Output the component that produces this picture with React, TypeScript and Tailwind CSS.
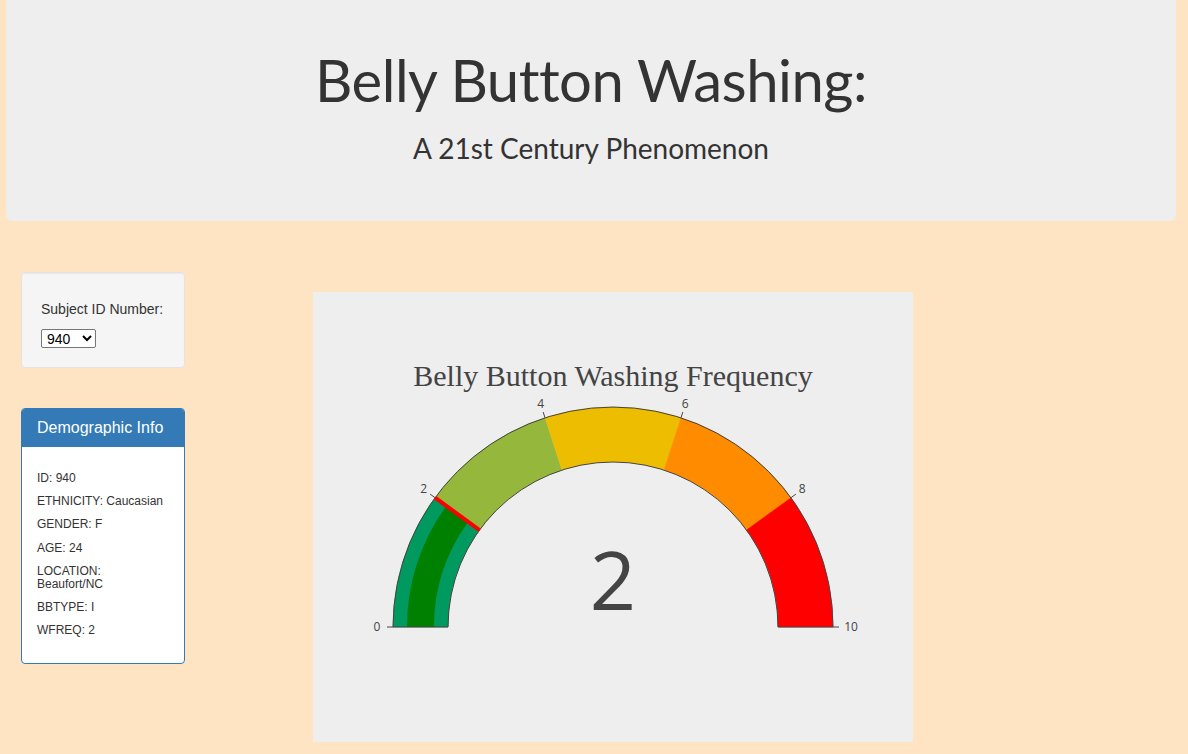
import React from "react";

const CX = 300;
const CY = 335;
const R_OUT = 220;
const R_IN = 165;

const angle = (v: number) => Math.PI * (1 - v / 10);
const pt = (v: number, r: number) => {
  const a = angle(v);
  return [CX + r * Math.cos(a), CY - r * Math.sin(a)];
};

// annular sector between two values, drawn from r0 to r1
function band(a: number, b: number, r0: number, r1: number) {
  const [x1, y1] = pt(a, r1);
  const [x2, y2] = pt(b, r1);
  const [x3, y3] = pt(b, r0);
  const [x4, y4] = pt(a, r0);
  return `M${x1},${y1} A${r1},${r1} 0 0 1 ${x2},${y2} L${x3},${y3} A${r0},${r0} 0 0 0 ${x4},${y4} Z`;
}

const steps = [
  { from: 0, to: 2, color: "#00995f" },
  { from: 2, to: 4, color: "#94b73c" },
  { from: 4, to: 6, color: "#edbd02" },
  { from: 6, to: 8, color: "#ff8c00" },
  { from: 8, to: 10, color: "#ff0000" },
];

const ticks = [0, 2, 4, 6, 8, 10];

const demographics = [
  ["ID", "940"],
  ["ETHNICITY", "Caucasian"],
  ["GENDER", "F"],
  ["AGE", "24"],
  ["LOCATION", "Beaufort/NC"],
  ["BBTYPE", "I"],
  ["WFREQ", "2"],
];

function Gauge() {
  const value = 2;
  return (
    <svg width={600} height={450} className="block">
      <text
        x={300}
        y={94}
        textAnchor="middle"
        fontSize={30}
        fill="#444"
        style={{ fontFamily: '"Liberation Serif", "Times New Roman", serif' }}
      >
        Belly Button Washing Frequency
      </text>
      {steps.map((s) => (
        <path key={s.from} d={band(s.from, s.to, R_IN, R_OUT)} fill={s.color} stroke={s.color} strokeWidth={0.5} />
      ))}
      <path d={band(0, value, 179, 206)} fill="#008000" />
      <path d={band(0, 10, R_IN, R_OUT)} fill="none" stroke="#444" strokeWidth={1} />
      {(() => {
        const [x1, y1] = pt(value, R_IN);
        const [x2, y2] = pt(value, R_OUT);
        return <line x1={x1} y1={y1} x2={x2} y2={y2} stroke="#ff0000" strokeWidth={4} />;
      })()}
      {ticks.map((t) => {
        const [x1, y1] = pt(t, R_OUT);
        const [x2, y2] = pt(t, R_OUT + 6);
        const [lx, ly] = pt(t, R_OUT + 14);
        return (
          <g key={t}>
            <line x1={x1} y1={y1} x2={x2} y2={y2} stroke="#444" strokeWidth={1} />
            <text
              x={t === 0 ? lx - 2 : t === 10 ? lx + 4 : lx}
              y={ly + 4}
              textAnchor="middle"
              fontSize={12}
              fill="#444"
              style={{ fontFamily: '"Open Sans", Verdana, sans-serif' }}
            >
              {t}
            </text>
          </g>
        );
      })}
      <text
        x={300}
        y={318}
        textAnchor="middle"
        fontSize={81}
        fill="#444"
        style={{ fontFamily: '"Open Sans", Verdana, sans-serif' }}
      >
        {value}
      </text>
    </svg>
  );
}

export default function App() {
  return (
    <div className="min-h-[754px] bg-[#ffe4c4] font-['Liberation_Sans',Arial,sans-serif] text-[#333]">
      <header className="ml-[6px] mr-[12px] flex h-[221px] flex-col items-center rounded-b-[6px] bg-[#eeeeee] pt-[40px] font-['Lato',sans-serif] text-[#333]">
        <h1 className="text-[58px] leading-[80px] tracking-[-0.5px]">Belly Button Washing:</h1>
        <p className="mt-[10px] text-[28px] leading-[36px]">A 21st Century Phenomenon</p>
      </header>

      <div className="flex items-start pl-[21px] pt-[51px]">
        <div className="flex w-[164px] flex-col gap-[40px]">
          <div className="rounded-[4px] border border-[#e3e3e3] bg-[#f5f5f5] px-[19px] pt-[26px] pb-[16px] shadow-[inset_0_1px_1px_rgba(0,0,0,0.05)]">
            <div className="text-[14px] leading-[20px]">Subject ID Number:</div>
            <select
              defaultValue="940"
              className="mt-[10px] h-[19px] w-[55px] rounded-[2px] border border-[#767676] bg-white pl-[1px] text-[14px] leading-[17px] text-black"
            >
              <option value="940">940</option>
            </select>
          </div>

          <div className="overflow-hidden rounded-[4px] border border-[#337ab7] bg-white">
            <div className="flex h-[38px] items-center bg-[#337ab7] px-[15px] text-[16px] text-white">
              Demographic Info
            </div>
            <div className="flex flex-col gap-[10px] px-[15px] pt-[25px] pb-[25px] text-[12px] leading-[1.1]">
              {demographics.map(([k, v]) => (
                <div key={k}>
                  {k}: {v}
                </div>
              ))}
            </div>
          </div>
        </div>

        <div className="ml-[128px] mt-[20px] bg-[#eeeeee]">
          <Gauge />
        </div>
      </div>
    </div>
  );
}
